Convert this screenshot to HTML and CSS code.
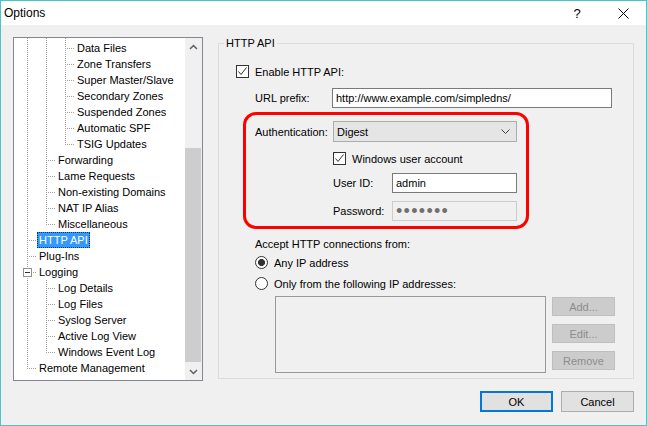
FILE: index.html
```html
<!DOCTYPE html>
<html lang="en">
<head>
  <meta charset="UTF-8">
  <title>Options</title>
  <link rel="stylesheet" href="styles.css">
</head>
<body>
<div class="window">
  <div class="titlebar">
    <span class="title">Options</span>
    <span class="tbtn">?</span>
    <span class="tbtn">
      <svg width="11" height="11" viewBox="0 0 11 11"><path d="M0.5 0.5L10.5 10.5M10.5 0.5L0.5 10.5" stroke="#000" stroke-width="1" fill="none"/></svg>
    </span>
  </div>

  <div class="main">
    <div class="tree">
      <div class="nodes">
        <div class="row"><i class="g"></i><i class="g"></i><i class="j"></i><span>Data Files</span></div>
        <div class="row"><i class="g"></i><i class="g"></i><i class="j"></i><span>Zone Transfers</span></div>
        <div class="row"><i class="g"></i><i class="g"></i><i class="j"></i><span>Super Master/Slave</span></div>
        <div class="row"><i class="g"></i><i class="g"></i><i class="j"></i><span>Secondary Zones</span></div>
        <div class="row"><i class="g"></i><i class="g"></i><i class="j"></i><span>Suspended Zones</span></div>
        <div class="row"><i class="g"></i><i class="g"></i><i class="j"></i><span>Automatic SPF</span></div>
        <div class="row"><i class="g"></i><i class="g"></i><i class="j end"></i><span>TSIG Updates</span></div>
        <div class="row"><i class="g"></i><i class="j"></i><span>Forwarding</span></div>
        <div class="row"><i class="g"></i><i class="j"></i><span>Lame Requests</span></div>
        <div class="row"><i class="g"></i><i class="j"></i><span>Non-existing Domains</span></div>
        <div class="row"><i class="g"></i><i class="j"></i><span>NAT IP Alias</span></div>
        <div class="row"><i class="g"></i><i class="j end"></i><span>Miscellaneous</span></div>
        <div class="row"><i class="j"></i><span class="sel">HTTP API</span></div>
        <div class="row"><i class="j"></i><span>Plug-Ins</span></div>
        <div class="row"><i class="j exp"><b class="box"></b></i><span>Logging</span></div>
        <div class="row"><i class="g"></i><i class="j"></i><span>Log Details</span></div>
        <div class="row"><i class="g"></i><i class="j"></i><span>Log Files</span></div>
        <div class="row"><i class="g"></i><i class="j"></i><span>Syslog Server</span></div>
        <div class="row"><i class="g"></i><i class="j"></i><span>Active Log View</span></div>
        <div class="row"><i class="g"></i><i class="j end"></i><span>Windows Event Log</span></div>
        <div class="row"><i class="j end"></i><span>Remote Management</span></div>
      </div>
      <div class="vscroll">
        <div class="arrow">
          <svg width="9" height="6" viewBox="0 0 9 6"><path d="M1 5L4.5 1.5L8 5" stroke="#606060" stroke-width="1.5" fill="none"/></svg>
        </div>
        <div class="track"><div class="thumb"></div></div>
        <div class="arrow">
          <svg width="9" height="6" viewBox="0 0 9 6"><path d="M1 1L4.5 4.5L8 1" stroke="#606060" stroke-width="1.5" fill="none"/></svg>
        </div>
      </div>
    </div>

    <fieldset class="group">
      <legend>HTTP API</legend>
      <div class="gbody">
        <div class="check first">
          <span class="cb"><svg width="11" height="11" viewBox="0 0 11 11"><path d="M1.5 5.5L4 8.5L9.5 1.5" stroke="#333" stroke-width="1" fill="none"/></svg></span>
          <span class="cblabel">Enable HTTP API:</span>
        </div>

        <div class="field url">
          <span class="lbl w77">URL prefix:</span>
          <span class="input urlbox">http://www.example.com/simpledns/</span>
        </div>

        <div class="mark">
          <div class="field">
            <span class="lbl w78">Authentication:</span>
            <span class="combo">Digest
              <svg width="9" height="5" viewBox="0 0 9 5"><path d="M0.5 0.5L4.5 4.5L8.5 0.5" stroke="#404040" stroke-width="1" fill="none"/></svg>
            </span>
          </div>
          <div class="check sub">
            <span class="cb"><svg width="11" height="11" viewBox="0 0 11 11"><path d="M1.5 5.5L4 8.5L9.5 1.5" stroke="#333" stroke-width="1" fill="none"/></svg></span>
            <span class="cblabel">Windows user account</span>
          </div>
          <div class="field sub gap8">
            <span class="lbl w59">User ID:</span>
            <span class="input short">admin</span>
          </div>
          <div class="field sub gap8">
            <span class="lbl w59">Password:</span>
            <span class="input short disabled"><span class="dots">&bull;&bull;&bull;&bull;&bull;&bull;&bull;</span></span>
          </div>
        </div>

        <div class="caption">Accept HTTP connections from:</div>
        <div class="check radio-row first-radio">
          <span class="rb on"></span>
          <span class="cblabel">Any IP address</span>
        </div>
        <div class="check radio-row">
          <span class="rb"></span>
          <span class="cblabel">Only from the following IP addresses:</span>
        </div>

        <div class="iplist">
          <div class="listbox"></div>
          <div class="side">
            <button class="sbtn">Add...</button>
            <button class="sbtn">Edit...</button>
            <button class="sbtn">Remove</button>
          </div>
        </div>
      </div>
    </fieldset>
  </div>

  <div class="footer">
    <button class="btn default">OK</button>
    <button class="btn">Cancel</button>
  </div>
</div>
</body>
</html>
```

FILE: styles.css
```css
body {
  margin: 0;
  font-family: "Liberation Sans", Arial, sans-serif;
  font-size: 11px;
  color: #000;
}
.window {
  width: 647px;
  height: 426px;
  box-sizing: border-box;
  border: 1px solid #4bc5c8;
  background: #f0f0f0;
}
.titlebar {
  display: flex;
  align-items: center;
  height: 24px;
  background: #fff;
}
.title {
  flex: 1;
  padding-left: 3px;
  font-size: 12px;
}
.tbtn {
  width: 46px;
  height: 24px;
  display: flex;
  align-items: center;
  justify-content: center;
  font-size: 13px;
}

.main {
  display: flex;
  align-items: flex-start;
  gap: 15px;
  padding: 12px 0 0 12px;
}

/* tree */
.tree {
  display: flex;
  width: 190px;
  height: 344px;
  box-sizing: border-box;
  border: 1px solid #828790;
  background: #fff;
}
.nodes {
  flex: 1;
  padding-top: 2px;
  overflow: hidden;
  background: repeating-linear-gradient(#a0a0a0 0 1px, transparent 1px 2px) 13px 0 / 1px 2px no-repeat,
    repeating-linear-gradient(#a0a0a0 0 1px, transparent 1px 2px) 32px 0 / 1px 2px no-repeat,
    repeating-linear-gradient(#a0a0a0 0 1px, transparent 1px 2px) 51px 0 / 1px 2px no-repeat;
}
.row {
  display: flex;
  align-items: center;
  height: 16px;
  white-space: nowrap;
}
.row span {
  padding: 0 2px;
  line-height: 16px;
}
.row .sel {
  background: #3399ff;
  color: #fff;
  outline: 1px dotted #10305e;
  outline-offset: -1px;
}
.g {
  flex: none;
  width: 19px;
  height: 16px;
  background: repeating-linear-gradient(#a0a0a0 0 1px, transparent 1px 2px) 13px 0 / 1px 16px no-repeat;
}
.j {
  flex: none;
  width: 23px;
  height: 16px;
  background:
    repeating-linear-gradient(to right, #a0a0a0 0 1px, transparent 1px 2px) 15px 8px / 8px 1px no-repeat,
    repeating-linear-gradient(#a0a0a0 0 1px, transparent 1px 2px) 13px 0 / 1px 16px no-repeat;
}
.j.end {
  background:
    repeating-linear-gradient(to right, #a0a0a0 0 1px, transparent 1px 2px) 15px 8px / 8px 1px no-repeat,
    repeating-linear-gradient(#a0a0a0 0 1px, transparent 1px 2px) 13px 0 / 1px 9px no-repeat;
}
.j.exp {
  display: flex;
  align-items: center;
}
.box {
  margin-left: 9px;
  width: 9px;
  height: 9px;
  box-sizing: border-box;
  border: 1px solid #919191;
  background: #fff linear-gradient(#333, #333) center / 5px 1px no-repeat;
}
.vscroll {
  flex: none;
  width: 17px;
  display: flex;
  flex-direction: column;
  background: #f0f0f0;
}
.arrow {
  height: 17px;
  display: flex;
  align-items: center;
  justify-content: center;
}
.track {
  flex: 1;
}
.thumb {
  margin: 93px 1px 0 0;
  height: 214px;
  background: #cdcdcd;
}

/* group box */
.group {
  margin: 0;
  padding: 0;
  width: 416px;
  height: 342px;
  box-sizing: border-box;
  border: 1px solid #dcdcdc;
  min-width: 0;
}
.group legend {
  margin-left: 5px;
  padding: 0 2px;
  line-height: 13px;
}
.gbody {
  padding-left: 17px;
}
.check {
  display: flex;
  align-items: center;
  height: 13px;
}
.check.first {
  margin-top: 15px;
}
.cb {
  flex: none;
  width: 13px;
  height: 13px;
  box-sizing: border-box;
  border: 1px solid #333;
  background: #fff;
  display: flex;
  align-items: center;
  justify-content: center;
}
.cblabel {
  margin-left: 6px;
  white-space: nowrap;
}
.field {
  display: flex;
  align-items: center;
}
.field.url {
  margin: 10px 0 0 19px;
}
.lbl {
  flex: none;
}
.w77 { width: 77px; }
.w78 { width: 78px; }
.w59 { width: 59px; }
.input {
  height: 20px;
  box-sizing: border-box;
  border: 1px solid #7a7a7a;
  background: #fff;
  padding-left: 3px;
  display: flex;
  align-items: center;
  white-space: nowrap;
}
.urlbox {
  width: 280px;
}
.short {
  width: 125px;
}
.input.disabled {
  border-color: #cccccc;
  background: #f0f0f0;
}
.dots {
  font-size: 18px;
  color: #707070;
  letter-spacing: 1.3px;
  line-height: 18px;
}
.mark {
  margin: 4px 0 0 7px;
  width: 286px;
  box-sizing: border-box;
  border: 3px solid #f00;
  border-radius: 13px;
  padding: 6px 0 5px 9px;
}
.combo {
  width: 184px;
  height: 21px;
  box-sizing: border-box;
  border: 1px solid #acacac;
  background: #e5e5e5;
  padding: 0 6px 0 3px;
  display: flex;
  align-items: center;
  justify-content: space-between;
}
.check.sub {
  margin: 10px 0 0 78px;
}
.field.sub {
  margin-left: 78px;
}
.gap8 {
  margin-top: 8px;
}
.caption {
  margin: 8px 0 0 19px;
  line-height: 14px;
}
.radio-row {
  margin: 8px 0 0 19px;
}
.radio-row.first-radio {
  margin-top: 5px;
}
.rb {
  flex: none;
  width: 13px;
  height: 13px;
  box-sizing: border-box;
  border: 1px solid #333;
  border-radius: 50%;
  background: #fff;
}
.rb.on {
  background: radial-gradient(circle, #333 0 3.2px, #fff 3.8px);
}
.iplist {
  display: flex;
  margin: 6px 0 0 39px;
}
.listbox {
  width: 271px;
  height: 77px;
  box-sizing: border-box;
  border: 1px solid #999;
  background: #f0f0f0;
}
.side {
  display: flex;
  flex-direction: column;
  gap: 8px;
  margin: 1px 0 0 6px;
}
.sbtn {
  width: 63px;
  height: 19px;
  padding: 0;
  border: 1px solid #bfbfbf;
  background: #cccccc;
  color: #8d8d8d;
  font: inherit;
}

/* dialog buttons */
.footer {
  display: flex;
  justify-content: flex-end;
  gap: 8px;
  padding-right: 12px;
  margin-top: 10px;
}
.btn {
  width: 73px;
  height: 21px;
  padding: 0;
  border: 1px solid #adadad;
  background: #e1e1e1;
  font: inherit;
  color: #000;
}
.btn.default {
  border: 2px solid #0078d7;
}
```
